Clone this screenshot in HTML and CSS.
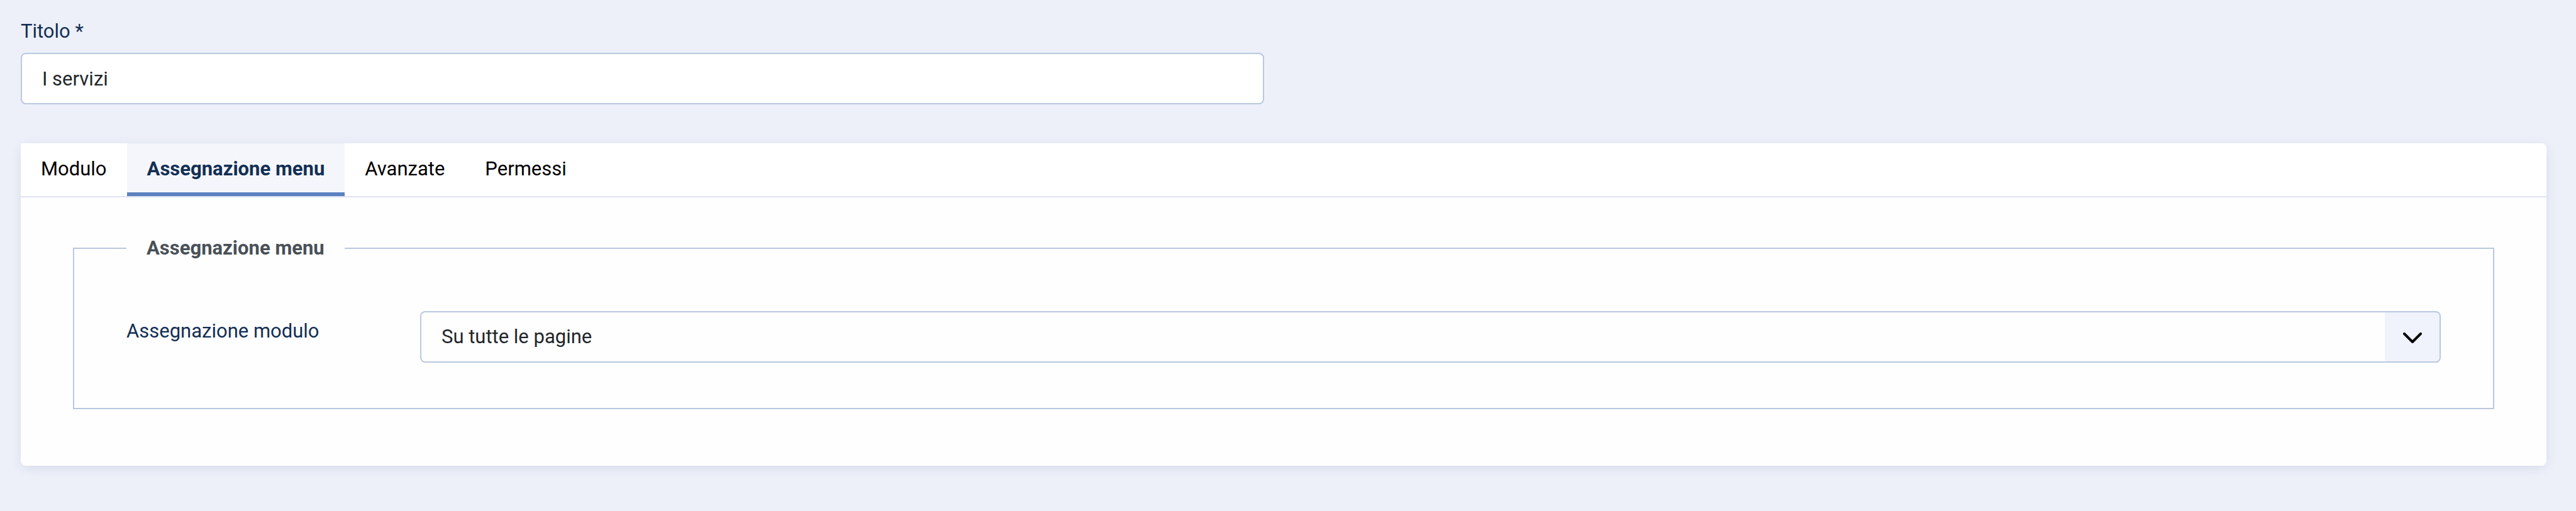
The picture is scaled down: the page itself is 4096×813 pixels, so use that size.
FILE: index.html
```html
<!DOCTYPE html>
<html lang="it">
<head>
<meta charset="utf-8">
<title>I servizi</title>
<link rel="stylesheet" href="styles.css">
</head>
<body>
<form class="module-form">
  <div class="title-row">
    <div class="title-field">
      <label class="label" for="title">Titolo *</label>
      <input class="control" id="title" type="text" value="I servizi" required>
    </div>
  </div>
  <section class="panel">
    <div class="tabs" role="tablist">
      <button class="tab" type="button" role="tab" aria-selected="false">Modulo</button>
      <button class="tab tab-active" type="button" role="tab" aria-selected="true">Assegnazione menu</button>
      <button class="tab" type="button" role="tab" aria-selected="false">Avanzate</button>
      <button class="tab" type="button" role="tab" aria-selected="false">Permessi</button>
    </div>
    <div class="tab-content" role="tabpanel">
      <fieldset class="group">
        <legend class="group-title">Assegnazione menu</legend>
        <div class="field-row">
          <label class="label field-label" for="assignment">Assegnazione modulo</label>
          <div class="select-wrap">
            <select class="control select" id="assignment">
              <option>Su tutte le pagine</option>
            </select>
            <svg class="chevron" viewBox="0 0 30 18" aria-hidden="true"><path d="M2 2 L15 15 L28 2"/></svg>
          </div>
        </div>
      </fieldset>
    </div>
  </section>
</form>
</body>
</html>
```
FILE: styles.css
```css
* {
  box-sizing: border-box;
}

body {
  margin: 0;
  background: #edf0f9;
  color: #22262a;
  font-family: Roboto, "Liberation Sans", sans-serif;
  font-size: 31px;
  line-height: 46px;
}

.module-form {
  padding: 27px 47px 64px 33px;
}

.title-row {
  display: grid;
  grid-template-columns: 1fr 1fr;
  gap: 62px;
}

.title-field {
  display: flex;
  flex-direction: column;
  gap: 11px;
}

.label {
  color: #132f53;
}

.control {
  width: 100%;
  height: 82px;
  padding: 0 32px;
  border: 2px solid #b9c8e0;
  border-radius: 8px;
  background: #fff;
  color: #22262a;
  font: inherit;
}

.panel {
  margin-top: 62px;
  border-radius: 0 8px 8px 8px;
  background: #fefefe;
  box-shadow: 0 4px 20px -4px rgba(20, 50, 90, 0.15);
}

.tabs {
  display: flex;
  border-bottom: 2px solid #dfe3f0;
  border-radius: 0 8px 0 0;
  background: #fff;
}

.tab {
  padding: 18px 32px 14px;
  border: 0;
  border-bottom: 6px solid transparent;
  background: #fff;
  color: #000;
  font: inherit;
}

.tab-active {
  border-bottom-color: #5d82c1;
  background: #f5f6fb;
  color: #132f53;
  font-weight: 700;
}

.tab-content {
  padding: 58px 83px 90px;
}

.group {
  min-width: 0;
  margin: 0;
  padding: 77px 83px 72px;
  border: 2px solid #b9c8e0;
}

.group-title {
  padding: 0 32px;
  color: #495057;
  font-weight: 700;
}

.field-row {
  display: flex;
  align-items: flex-start;
}

.field-label {
  flex: 0 0 467px;
  padding-top: 9px;
}

.select-wrap {
  position: relative;
  flex: 1;
}

.select {
  display: block;
  padding-right: 120px;
  appearance: none;
  background: linear-gradient(#f0f3fc, #f0f3fc) right / 87px 100% no-repeat #fefefe;
}

.chevron {
  position: absolute;
  top: 34px;
  right: 30px;
  width: 30px;
  height: 18px;
  fill: none;
  stroke: #000;
  stroke-width: 4;
  stroke-linecap: round;
  stroke-linejoin: round;
  pointer-events: none;
}
```
